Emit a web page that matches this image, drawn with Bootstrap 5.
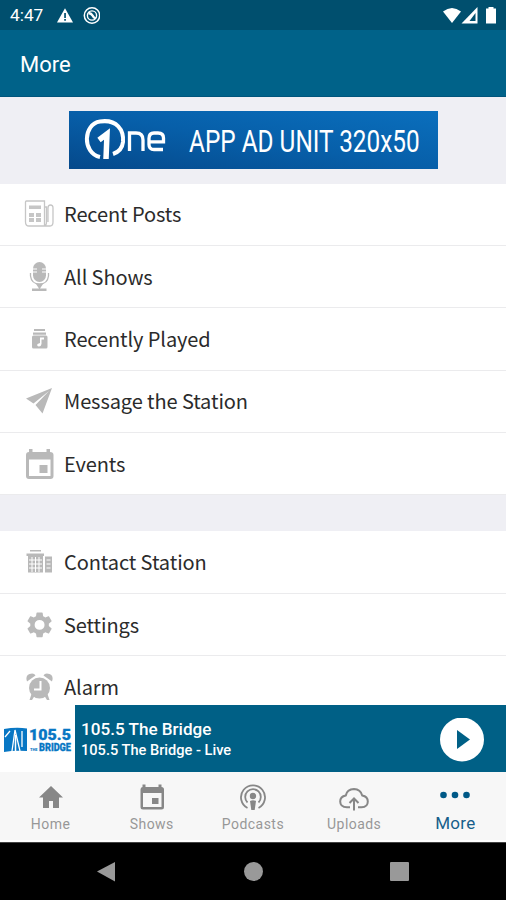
<!DOCTYPE html>
<html lang="en">
<head>
<meta charset="utf-8">
<meta name="viewport" content="width=device-width, initial-scale=1">
<title>More</title>
<link href="https://cdn.jsdelivr.net/npm/bootstrap@5.3.0/dist/css/bootstrap.min.css" rel="stylesheet">
<style>
body{font-family:Roboto,sans-serif;width:506px;height:900px;background:#efeff4}
svg{display:block;flex:none}
.statusbar{height:30px;background:#004f6e;padding:1px 9px 0 10px;font-size:17.3px}
.statusbar .alert-glyph{margin-left:14px}
.appbar{height:67px;background:#006289;padding:2px 0 0 20px;font-size:22px;border-bottom:1px solid #00557c}
.page{min-height:0}
.ad{height:86.5px}
.menu-item{height:62.4px;padding:0 0 0 24px;border:0;border-bottom:2px solid #ebebed;border-radius:0;gap:9px;font-family:"Noto Sans CJK SC",sans-serif;font-size:20px;letter-spacing:-.1px;color:#2b2b2b;line-height:1}
.menu-item svg{fill:#b9b9b9}
.gap-block{height:36px}
.player{height:67px;background:#006086;padding-top:2px}
.cover{width:75px;height:67px;background:#fff;margin-top:-2px}
.track-info{padding-left:6px}
.t1{font-size:17.1px;line-height:22px;font-weight:500}
.t2{font-size:14.6px;line-height:21px;font-weight:500}
.play{margin-right:22px}
.tabs{height:70px;background:#f7f7f7;border-bottom:2px solid #fff}
.tab{width:20%;font-size:14px;letter-spacing:.45px;color:#979797;line-height:16px;padding-top:10px}
.tab svg{fill:#878787;margin-bottom:4px}
.tab.current{color:#175f8b;font-size:17px;letter-spacing:.3px;line-height:15px}
.tab.current svg{fill:#005987}
.sysnav{height:58px;background:#000;border-top:1px solid #444}
</style>
</head>
<body class="d-flex flex-column overflow-hidden">
<header class="flex-shrink-0 text-white">
  <div class="statusbar d-flex align-items-center">
    <span>4:47</span>
    <svg class="alert-glyph" width="16" height="16" viewBox="0 0 16 16"><path d="M8 .3 16 14.500H0z" fill="#fff"/><path d="M7.200 5h1.700v5H7.200zm0 6h1.700v1.700H7.200z" fill="#004f6e"/></svg>
    <svg class="ms-2" width="19" height="18" viewBox="0 0 19 18" fill="none" stroke="#fff"><circle cx="11" cy="8.500" r="7.700" stroke-width="1.500"/><circle cx="11" cy="8.500" r="4.600" stroke-width="1.400"/><path d="M7.500 6q3 .5 4 2.500t3 3" stroke-width="2.400"/></svg>
    <svg class="ms-auto" width="55" height="18" viewBox="0 0 55 18" fill="#fff"><path d="M1 4.500Q10-2.500 19 4.500L10 16z"/><path d="M35.500 0v16.500H19.500z"/><path d="M33.500 6v8h-6z" fill="#004f6e"/><path d="M46.500 0h5v1.500h2.500v15h-10v-15h2.500z"/></svg>
  </div>
  <div class="appbar d-flex align-items-center">More</div>
</header>

<main class="page flex-grow-1 overflow-hidden">
  <div class="ad d-flex justify-content-center align-items-center">
    <svg width="369" height="58" viewBox="0 0 369 58" role="img">
      <defs><linearGradient id="g" x1="0" y1="1" x2="1" y2="0"><stop offset="0" stop-color="#05498b"/><stop offset=".5" stop-color="#075fa9"/><stop offset="1" stop-color="#0a6fbd"/></linearGradient></defs>
      <path fill="url(#g)" d="M0 0h369v58H0z"/>
      <g fill="none" stroke="#fff" stroke-width="4"><path d="M31 46C13 42 14 13 31 10.500S55 19 54 31q-1 9-10 12"/><path d="M30 29l8-6-1 25" stroke-width="5.500"/></g>
      <g fill="none" stroke="#fff" stroke-width="3.300"><path d="M60.500 40V22H67q7 0 7 7v11M94 38.500H85q-5 0-5-5v-6q0-5.500 5-5.500h4q5.500 0 5.500 5v3.800H80"/></g>
      <text transform="translate(120 41) scale(.79 1)" font-size="32" fill="#fff" textLength="292" lengthAdjust="spacingAndGlyphs">APP AD UNIT 320x50</text>
    </svg>
  </div>
  <div class="list-group list-group-flush">
    <div class="list-group-item menu-item d-flex align-items-center">
      <svg width="31" height="32" viewBox="0 0 31 32"><path d="M2.500 3h18v25H5q-3.500 0-3.500-4V4q0-1 1-1zM20.500 9h2v15q0 4-3 4H26q3 0 3-4V10q0-3-2.500-3t-2.500 3v14" fill="none" stroke="#c6c6c6" stroke-width="1.300"/><path d="M5 7.500h12v3.500H5zM5 15h5v4H5zM12 15h5v4h-5zM5 20h5v4H5zM12 20h5v4h-5z" fill="#c6c6c6"/></svg>Recent Posts</div>
    <div class="list-group-item menu-item d-flex align-items-center">
      <svg width="31" height="32" viewBox="0 0 31 32"><rect x="9" y="1" width="13" height="20" rx="6.500"/><path d="M9 8h4m5 0h4M9 11h4m5 0h4" stroke="#fff" stroke-width="1"/><path d="M6.500 12v3q1 8 9 8t9-8v-3" fill="none" stroke="#b9b9b9" stroke-width="1.300"/><path d="M12 23h7l-3 4.500h6.500V30H8v-2.500h7z"/></svg>All Shows</div>
    <div class="list-group-item menu-item d-flex align-items-center">
      <svg width="31" height="32" viewBox="0 0 31 32"><path d="M10 6h11v2H10zM9 9.500h13v2.300H9z"/><rect x="8" y="12.500" width="15.500" height="13" rx="1.500"/><path d="M16 14.500h4v2h-2.500v4.500q-.5 2.500-2.500 2.500-2.500-.5-1.500-2.500l2.500-1z" fill="#fff"/></svg>Recently Played</div>
    <div class="list-group-item menu-item d-flex align-items-center">
      <svg width="31" height="32" viewBox="0 0 31 32"><path d="M28 3 2 13.500l7.500 5L25 6 11.500 20 18.500 28.500z"/></svg>Message the Station</div>
    <div class="list-group-item menu-item d-flex align-items-center">
      <svg width="31" height="32" viewBox="0 0 31 32"><path fill-rule="evenodd" d="M5 1h3.500v3h14V1H26v3q3.500 0 3.500 3v21q0 3-3 3h-21.500q-3 0-3-3V7q0-3 3-3zm0 10.500V28h21.500V11.500z"/><path d="M15.500 17h8v8h-8z"/></svg>Events</div>
    <div class="gap-block"></div>
    <div class="list-group-item menu-item d-flex align-items-center">
      <svg width="31" height="32" viewBox="0 0 31 32"><path d="M6 4h11v1.500H6zM2.500 7.500H20V10H2.500zM4 10h15v16.500H4zM21 10.500h7v16h-7z"/><path d="M8 11v15M11.500 11v15M15 11v15M5 14h13M5 18h13M5 22h13M22.500 14h4M22.500 18h4M22.500 22h4" stroke="#fff" stroke-width="1"/></svg>Contact Station</div>
    <div class="list-group-item menu-item d-flex align-items-center">
      <svg width="31" height="32" viewBox="0 0 31 32"><g transform="translate(.7 1) scale(1.240)"><path d="M19.430 12.980c.04-.32.07-.64.07-.98s-.03-.66-.07-.98l2.110-1.650c.19-.15.24-.42.12-.64l-2-3.460c-.12-.22-.39-.3-.61-.22l-2.490 1c-.52-.4-1.080-.73-1.690-.98l-.38-2.650C14.460 2.180 14.250 2 14 2h-4c-.25 0-.46.18-.49.42l-.38 2.650c-.61.25-1.170.59-1.690.98l-2.490-1c-.23-.09-.49 0-.61.22l-2 3.460c-.13.22-.07.49.12.64l2.110 1.650c-.04.32-.07.65-.07.98s.03.66.07.98l-2.110 1.650c-.19.15-.24.42-.12.64l2 3.460c.12.22.39.3.61.22l2.490-1c.52.4 1.080.73 1.690.98l.38 2.650c.03.24.24.42.49.42h4c.25 0 .46-.18.49-.42l.38-2.650c.61-.25 1.170-.59 1.690-.98l2.490 1c.23.09.49 0 .61-.22l2-3.460c.12-.22.07-.49-.12-.64l-2.110-1.650zM12 16a4 4 0 1 1 0-8 4 4 0 0 1 0 8z"/></g></svg>Settings</div>
    <div class="list-group-item menu-item d-flex align-items-center">
      <svg width="31" height="32" viewBox="0 0 31 32"><circle cx="15.500" cy="17" r="10.500"/><path d="M3 10.500Q1 4.500 5.500 3t6 1.500zM28 10.500Q30 4.500 25.500 3t-6 1.500zM7.500 23l3 2L8 29H5.500zM23.500 23l-3 2 2.500 4h2.500z"/><path d="M16.500 10v8.500H10" fill="none" stroke="#fff" stroke-width="2"/></svg>Alarm</div>
  </div>
</main>

<footer class="flex-shrink-0">
  <div class="player d-flex align-items-center text-white">
    <div class="cover d-flex align-items-center">
      <svg width="75" height="67" viewBox="0 0 75 67"><path fill="#0877c4" d="M4 24q12-2 23-.5V46q-12-1-23 1z"/><path d="M12 46l3-21 5 21M5 32l5-6M22 26v16" fill="none" stroke="#fff" stroke-width="1.300"/><path d="M15.500 30v17" stroke="#fff" stroke-width="1.500"/><g fill="#0877c4" stroke="#0877c4" stroke-width=".3" font-weight="900"><text x="29" y="35" font-size="14.500" textLength="42" lengthAdjust="spacingAndGlyphs">105.5</text><text x="30" y="46" font-size="4" stroke="none">THE</text><text x="39" y="46.200" font-size="11" textLength="32" lengthAdjust="spacingAndGlyphs">BRIDGE</text></g></svg>
    </div>
    <div class="track-info flex-grow-1 text-nowrap"><div class="t1">105.5 The Bridge</div><div class="t2">105.5 The Bridge - Live</div></div>
    <svg class="play" width="44" height="44" viewBox="0 0 44 44"><circle cx="22" cy="21.500" r="22" fill="#fff"/><path d="M17 12 30 21.500 17 31z" fill="#006086"/></svg>
  </div>
  <nav class="tabs d-flex">
    <div class="tab d-flex flex-column align-items-center"><svg width="30" height="30" viewBox="0 0 30 30"><path d="M15 4 3 15.500h4V26h6v-7h4v7h6V15.500h4z"/></svg>Home</div>
    <div class="tab d-flex flex-column align-items-center"><svg width="30" height="30" viewBox="0 0 30 30"><path fill-rule="evenodd" d="M5.500 2.500h3V5h13V2.500h3V5Q27 5 27 7.500V25q0 2.500-2.500 2.500h-18.500Q3.500 27.500 3.500 25V7.500Q3.500 5 5.500 5zM6 11v14h18.500V11z"/><path d="M15 16h6.500v6H15z"/></svg>Shows</div>
    <div class="tab d-flex flex-column align-items-center"><svg width="30" height="30" viewBox="0 0 30 30"><path d="M9.500 26A12 12 0 1 1 20.500 26M9.500 20.500A7.800 7.800 0 1 1 20.500 20.500" fill="none" stroke="#878787" stroke-width="1.800"/><circle cx="15" cy="14" r="3.200"/><path d="M12 19q3-1.500 6 0l-1.300 9h-3.400z"/></svg>Podcasts</div>
    <div class="tab d-flex flex-column align-items-center"><svg width="30" height="30" viewBox="0 0 30 30"><path d="M11 25.300H8Q1.200 25 1.200 19.500q0-5 5.600-6Q8 7.200 15 7q6.500.2 8.200 6.500 5.600 1 5.600 6 0 5.500-6.300 5.800H19M15 28.500V17m-4.500 4L15 16.500l4.500 4.500" fill="none" stroke="#878787" stroke-width="2"/></svg>Uploads</div>
    <div class="tab current d-flex flex-column align-items-center"><svg width="30" height="30" viewBox="0 0 30 30"><circle cx="3.500" cy="13" r="3.300"/><circle cx="15" cy="13" r="3.300"/><circle cx="26.500" cy="13" r="3.300"/></svg>More</div>
  </nav>
  <div class="sysnav d-flex justify-content-center align-items-center">
    <svg width="314" height="20" viewBox="0 0 314 20" fill="#999"><path d="M1 9.500 19 0v19.500z"/><circle cx="157.500" cy="9.500" r="9.500"/><rect x="294" y="0" width="19" height="19" rx="1"/></svg>
  </div>
</footer>
<script src="https://cdn.jsdelivr.net/npm/bootstrap@5.3.0/dist/js/bootstrap.bundle.min.js"></script>
</body>
</html>
